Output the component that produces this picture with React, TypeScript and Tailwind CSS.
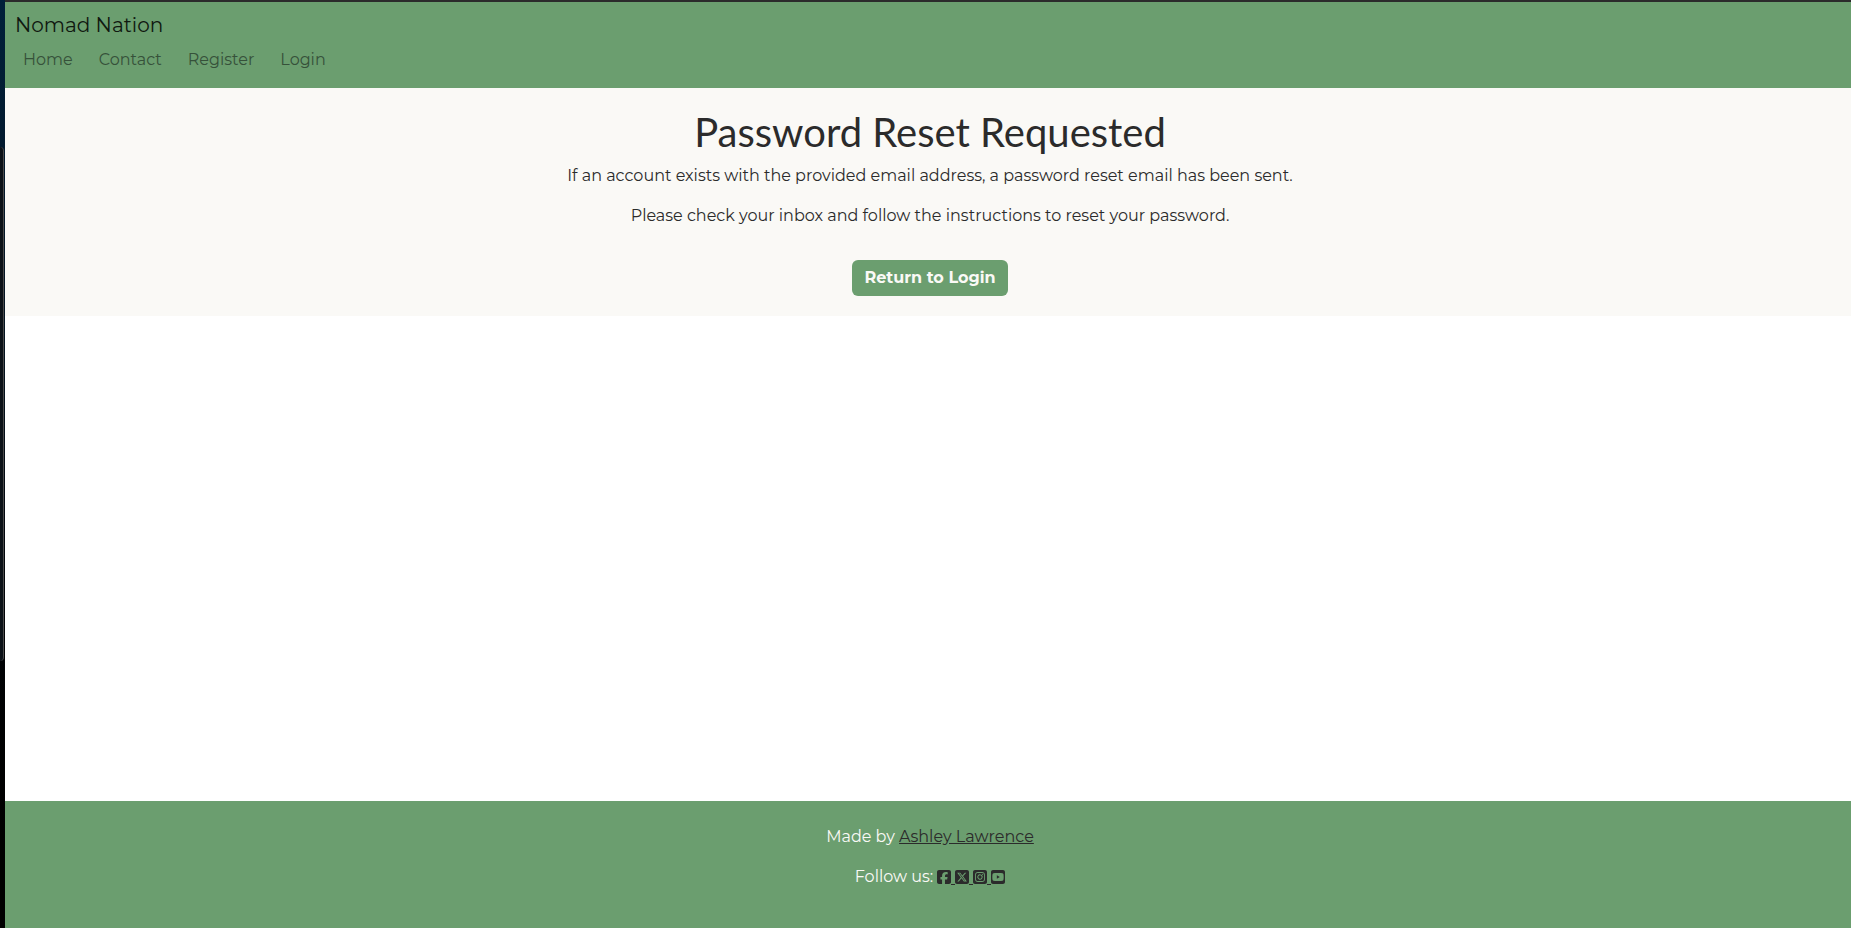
import {
  FaSquareFacebook,
  FaSquareXTwitter,
  FaSquareInstagram,
  FaSquareYoutube,
} from "react-icons/fa6";

const navLinks = ["Home", "Contact", "Register", "Login"];

const socialLinks = [
  { label: "Facebook", Icon: FaSquareFacebook },
  { label: "X", Icon: FaSquareXTwitter },
  { label: "Instagram", Icon: FaSquareInstagram },
  { label: "YouTube", Icon: FaSquareYoutube },
];

function Header() {
  return (
    <header className="bg-[#6b9e6f] px-[10px] pt-2 pb-3">
      <a href="#" className="block text-[20px] leading-[30px] text-[#101810]">
        Nomad Nation
      </a>
      <nav className="flex gap-[10px] pt-1">
        {navLinks.map((link) => (
          <a key={link} href="#" className="px-2 py-1 leading-6 text-[#36513a]">
            {link}
          </a>
        ))}
      </nav>
    </header>
  );
}

function Message() {
  return (
    <main className="flex flex-col items-center bg-[#faf9f6] py-5 pr-5 pl-6 text-center text-[#2b2b2b]">
      <h1 className="mb-2 font-['Lato',sans-serif] text-[40px] leading-[48px]">
        Password Reset Requested
      </h1>
      <p className="mb-4 leading-6">
        If an account exists with the provided email address, a password reset email has been sent.
      </p>
      <p className="mb-8 leading-6">
        Please check your inbox and follow the instructions to reset your password.
      </p>
      <a
        href="#"
        className="rounded-md bg-[#6b9e6f] px-3 py-[6px] leading-6 font-bold text-[#faf9f6]"
      >
        Return to Login
      </a>
    </main>
  );
}

function Footer() {
  return (
    <footer className="mt-auto bg-[#6b9e6f] pt-6 pr-5 pb-[39px] pl-6 text-center text-[#faf9f6]">
      <p className="mb-4 leading-6">
        Made by{" "}
        <a href="#" className="text-[#2b2b2b] underline">
          Ashley Lawrence
        </a>
      </p>
      <div className="flex items-center justify-center gap-1 leading-6">
        <span>Follow us:</span>
        <span className="flex text-[#2b2b2b]">
          {socialLinks.map(({ label, Icon }, index) => (
            <a key={label} href="#" aria-label={label} className="flex items-end">
              <Icon className="h-4 w-[14px]" />
              {index < socialLinks.length - 1 && <span className="h-px w-1 bg-[#2b2b2b]" />}
            </a>
          ))}
        </span>
      </div>
    </footer>
  );
}

export default function App() {
  return (
    <div className="flex min-h-screen font-['Montserrat','Inter',sans-serif] text-[16px]">
      <div className="flex w-[5px] shrink-0 flex-col bg-linear-to-b from-[#00203a] via-[#04121e] via-40% to-black">
        <div className="h-[147px]" />
        <div className="mr-px h-[514px] rounded-r-sm border-r border-[#4a4a4a] bg-[#0c1218]" />
      </div>
      <div className="flex grow flex-col border-t-2 border-[#2b2b2b] bg-white">
        <Header />
        <Message />
        <Footer />
      </div>
    </div>
  );
}
